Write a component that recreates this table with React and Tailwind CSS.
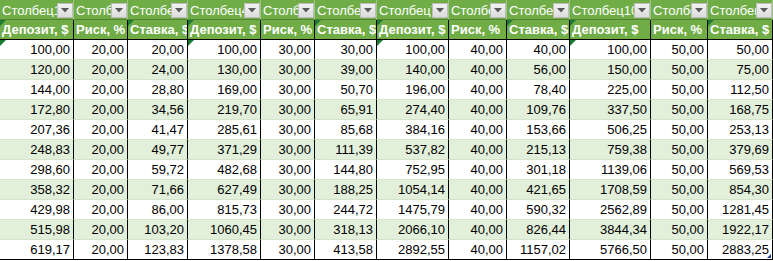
import React from 'react'

const COLS = [
  { title: 'Столбец1', head: 'Депозит, $', w: 74, mark: true },
  { title: 'Столбец2', head: 'Риск, %', w: 54 },
  { title: 'Столбец3', head: 'Ставка, $', w: 60, mark: true },
  { title: 'Столбец4', head: 'Депозит, $', w: 73, mark: true },
  { title: 'Столбец5', head: 'Риск, %', w: 54 },
  { title: 'Столбец6', head: 'Ставка, $', w: 62, mark: true },
  { title: 'Столбец7', head: 'Депозит, $', w: 72, mark: true },
  { title: 'Столбец8', head: 'Риск, %', w: 58 },
  { title: 'Столбец9', head: 'Ставка, $', w: 63, mark: true },
  { title: 'Столбец10', head: 'Депозит, $', w: 81, mark: true },
  { title: 'Столбец11', head: 'Риск, %', w: 57 },
  { title: 'Столбец12', head: 'Ставка, $', w: 65, mark: true },
]

const ROWS = [
  ['100,00', '20,00', '20,00', '100,00', '30,00', '30,00', '100,00', '40,00', '40,00', '100,00', '50,00', '50,00'],
  ['120,00', '20,00', '24,00', '130,00', '30,00', '39,00', '140,00', '40,00', '56,00', '150,00', '50,00', '75,00'],
  ['144,00', '20,00', '28,80', '169,00', '30,00', '50,70', '196,00', '40,00', '78,40', '225,00', '50,00', '112,50'],
  ['172,80', '20,00', '34,56', '219,70', '30,00', '65,91', '274,40', '40,00', '109,76', '337,50', '50,00', '168,75'],
  ['207,36', '20,00', '41,47', '285,61', '30,00', '85,68', '384,16', '40,00', '153,66', '506,25', '50,00', '253,13'],
  ['248,83', '20,00', '49,77', '371,29', '30,00', '111,39', '537,82', '40,00', '215,13', '759,38', '50,00', '379,69'],
  ['298,60', '20,00', '59,72', '482,68', '30,00', '144,80', '752,95', '40,00', '301,18', '1139,06', '50,00', '569,53'],
  ['358,32', '20,00', '71,66', '627,49', '30,00', '188,25', '1054,14', '40,00', '421,65', '1708,59', '50,00', '854,30'],
  ['429,98', '20,00', '86,00', '815,73', '30,00', '244,72', '1475,79', '40,00', '590,32', '2562,89', '50,00', '1281,45'],
  ['515,98', '20,00', '103,20', '1060,45', '30,00', '318,13', '2066,10', '40,00', '826,44', '3844,34', '50,00', '1922,17'],
  ['619,17', '20,00', '123,83', '1378,58', '30,00', '413,58', '2892,55', '40,00', '1157,02', '5766,50', '50,00', '2883,25'],
]

// columns whose first data cell carries the green error marker
const FIRST_ROW_MARK = [0, 3, 6, 9]

function Marker() {
  return (
    <svg className="absolute left-0 top-0" width="6" height="6" viewBox="0 0 6 6">
      <polygon points="0,0 6,0 0,6" fill="#1a7a34" />
    </svg>
  )
}

function FilterButton() {
  return (
    <div className="shrink-0 w-[16px] h-[15px] mt-[3px] flex items-center justify-center bg-gradient-to-b from-[#f2f2f2] to-[#dcdcdc] border border-[#bdbdbd]">
      <svg width="8" height="5" viewBox="0 0 8 5">
        <polygon points="0,0 8,0 4,4.5" fill="#5a5a5a" />
      </svg>
    </div>
  )
}

export default function App() {
  const template = COLS.map((c) => `${c.w}px`).join(' ')

  return (
    <div className="w-[773px] h-[261px] overflow-hidden bg-white font-['Liberation_Sans',Arial,sans-serif] text-[13px] leading-none">
      <div className="grid" style={{ gridTemplateColumns: template }}>
        {/* table header with filter buttons */}
        {COLS.map((c) => (
          <div
            key={c.title}
            className="h-[20px] flex items-start bg-[#70ad47] border-r border-r-[#9ec585] border-b border-b-[#548235]"
          >
            <span className="flex-1 min-w-0 overflow-hidden whitespace-nowrap pl-[2px] pt-[4px] text-white">
              {c.title}
            </span>
            <FilterButton />
          </div>
        ))}

        {/* green caption row */}
        {COLS.map((c, i) => (
          <div
            key={'h' + i}
            className="relative h-[20px] flex items-center bg-[#70ad47] border-r border-b border-black overflow-hidden"
          >
            {c.mark && <Marker />}
            <span className="pl-[2px] whitespace-nowrap font-bold text-white">{c.head}</span>
          </div>
        ))}

        {/* data rows */}
        {ROWS.map((row, r) =>
          row.map((v, i) => {
            const last = r === ROWS.length - 1
            return (
              <div
                key={r + '-' + i}
                className={`relative h-[20px] flex items-center justify-end pr-[3px] border-r border-r-black ${
                  r % 2 === 1 ? 'bg-[#e2efda]' : 'bg-white'
                } ${last ? 'border-b border-b-black' : 'border-b border-b-[#d6e4cc]'}`}
              >
                {r === 0 && FIRST_ROW_MARK.includes(i) && <Marker />}
                <span className="whitespace-nowrap text-black">{v}</span>
                {last && i === row.length - 1 && (
                  <svg className="absolute right-[1px] bottom-[1px]" width="4" height="4" viewBox="0 0 4 4">
                    <polygon points="4,0 4,4 0,4" fill="#1f3f8f" />
                  </svg>
                )}
              </div>
            )
          })
        )}
      </div>
    </div>
  )
}
